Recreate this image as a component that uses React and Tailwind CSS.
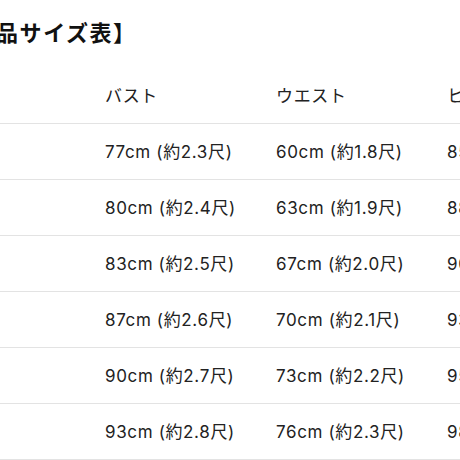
const rows = [
  ["S", "77cm (約2.3尺)", "60cm (約1.8尺)", "85cm (約2.6尺)"],
  ["M", "80cm (約2.4尺)", "63cm (約1.9尺)", "88cm (約2.7尺)"],
  ["L", "83cm (約2.5尺)", "67cm (約2.0尺)", "90cm (約2.7尺)"],
  ["XL", "87cm (約2.6尺)", "70cm (約2.1尺)", "93cm (約2.8尺)"],
  ["2XL", "90cm (約2.7尺)", "73cm (約2.2尺)", "95cm (約2.9尺)"],
  ["3XL", "93cm (約2.8尺)", "76cm (約2.3尺)", "98cm (約3.0尺)"],
];

export default function App() {
  return (
    <div
      className="w-[460px] h-[460px] overflow-hidden bg-white text-[#222] tracking-[0.04em]"
      style={{ fontFamily: 'Inter, "Noto Sans CJK JP", sans-serif' }}
    >
      <div className="-ml-[66px] w-[760px]">
        <h2 className="h-[68px] pl-[15px] pt-[18px] text-[22px] font-bold leading-[30px] text-[#111] tracking-[0.07em]">
          【商品サイズ表】
        </h2>
        <div className="flex h-[56px] items-center pt-[3px] border-b border-[#e3e3e3] text-[17px]">
          <div className="w-[171px]">サイズ</div>
          <div className="w-[171px]">バスト</div>
          <div className="w-[171px]">ウエスト</div>
          <div className="w-[171px]">ヒップ</div>
        </div>
        {rows.map((r) => (
          <div
            key={r[0]}
            className="flex h-[56px] items-center pt-[2px] border-b border-[#e3e3e3] text-[17px]"
          >
            <div className="w-[171px]">{r[0]}</div>
            <div className="w-[171px]">{r[1]}</div>
            <div className="w-[171px]">{r[2]}</div>
            <div className="w-[171px]">{r[3]}</div>
          </div>
        ))}
      </div>
    </div>
  );
}
